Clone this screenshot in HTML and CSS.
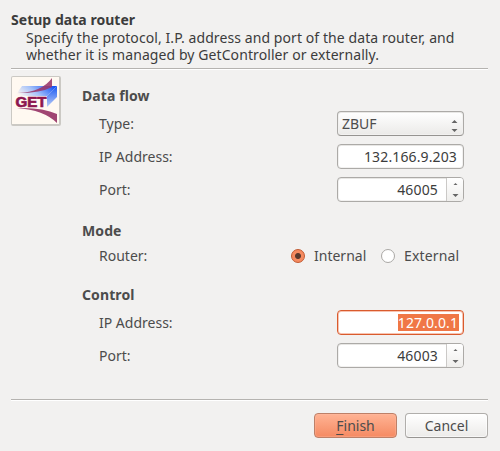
FILE: index.html
```html
<!DOCTYPE html>
<html lang="en">
<head>
<meta charset="utf-8">
<title>Setup data router</title>
<link rel="stylesheet" href="styles.css">
</head>
<body>
<main class="dialog">
  <header class="header">
    <h1 class="title">Setup data router</h1>
    <p class="description"><span class="line-one">Specify the protocol, I.P. address and port of the data router, and</span><span class="line-two">whether it is managed by GetController or externally.</span></p>
  </header>
  <div class="content">
    <div class="logo">
      <svg width="46" height="46" viewBox="0 0 46 46" role="img" aria-label="GET">
        <defs>
          <linearGradient id="blue" x1="0" x2="1" y1=".6" y2=".3"><stop offset="0" stop-color="#fff7ef"/><stop offset=".45" stop-color="#a5c2fa"/><stop offset="1" stop-color="#1553f5"/></linearGradient>
          <linearGradient id="side" x1="0" x2="0" y1="0" y2="1"><stop offset="0" stop-color="#1958f2"/><stop offset="1" stop-color="#bacdf7"/></linearGradient>
        </defs>
        <path d="M9 9H44L34 19H2Z" fill="url(#blue)"/>
        <path d="M44 9V20L34 30V19Z" fill="url(#side)"/>
        <path d="M5 16Q29 15 39 1V10Q28 16 5 16Z" fill="#9b3569" fill-opacity=".88"/>
        <path d="M4 31Q29 30 44 37V46Q31 33 4 31Z" fill="#a04572"/>
        <text class="logo-text" x="2.5" y="30" textLength="31" lengthAdjust="spacingAndGlyphs">GET</text>
      </svg>
    </div>
    <form class="form">
      <h2 class="section">Data flow</h2>
      <div class="row"><span class="label">Type:</span><div class="field combo"><span class="value">ZBUF</span><svg class="arrows" width="7" height="13" viewBox="0 0 7 13"><path d="M.5 4L3.5 1L6.5 4ZM.5 10H6.5L3.5 13Z"/></svg></div></div>
      <div class="row"><span class="label">IP Address:</span><div class="field entry"><span class="value address">132.166.9.203</span></div></div>
      <div class="row"><span class="label">Port:</span><div class="field spin"><span class="value number">46005</span><span class="stepper"><svg class="arrows" width="7" height="15" viewBox="0 0 7 15"><path d="M1.5 3L3.5 1L5.5 3ZM.5 12H6.5L3.5 15Z"/></svg></span></div></div>
      <h2 class="section mode">Mode</h2>
      <div class="row router"><span class="router-label">Router:</span><div class="options"><span class="radio selected"></span><span class="internal">Internal</span><span class="radio"></span><span class="external">External</span></div></div>
      <h2 class="section control">Control</h2>
      <div class="row"><span class="label">IP Address:</span><div class="field entry focused"><span class="selection">127.0.0.1</span></div></div>
      <div class="row"><span class="label">Port:</span><div class="field spin"><span class="value number">46003</span><span class="stepper"><svg class="arrows" width="7" height="15" viewBox="0 0 7 15"><path d="M1.5 3L3.5 1L5.5 3ZM.5 12H6.5L3.5 15Z"/></svg></span></div></div>
    </form>
  </div>
  <footer class="footer">
    <button class="button primary"><span class="mnemonic">F</span>inish</button>
    <button class="button">Cancel</button>
  </footer>
</main>
</body>
</html>
```
FILE: styles.css
```css
* { box-sizing: border-box; }
body { margin: 0; background: #f2f1f0; color: #4c4c4c; font: 14px/18px "Noto Sans", sans-serif; white-space: nowrap; overflow: hidden; }
.dialog { width: 500px; height: 451px; padding: 11px 12px 12px 11px; display: flex; flex-direction: column; }
.header { height: 59px; border-bottom: 1px solid #fff; box-shadow: inset 0 -1px #b5b3b0; }
h1, h2, p { margin: 0; font-size: 14px; }
.title { line-height: 18px; color: #3c3c3c; letter-spacing: .03px; }
.description { padding-left: 15px; line-height: 17px; color: #3c3c3c; }
.line-one, .line-two { display: block; letter-spacing: .085px; }
.content { display: flex; gap: 21px; height: 330px; padding-top: 6px; }
.logo { width: 50px; height: 50px; border: 1px solid #cbc9c4; border-right-width: 2px; border-bottom-width: 2px; border-radius: 2px; background: #fff9f1; }
.logo svg { display: block; margin-left: 1px; }
.logo-text { font: 900 14.5px "Liberation Sans", sans-serif; fill: #8d1750; stroke: #8d1750; stroke-width: .7px; }
.form { width: 382px; padding-top: 11px; }
.section { height: 18px; line-height: 18px; letter-spacing: .1px; }
.row { display: flex; justify-content: space-between; align-items: center; height: 25px; margin-bottom: 8px; padding-left: 17px; }
.label, .value { padding-top: 2px; }
.section + .row { margin-top: 6px; }
.mode { margin-top: 20px; }
.mode + .router { margin-top: 4px; height: 24px; margin-bottom: 0; padding-right: 4px; }
.control { margin-top: 18px; }
.field { width: 127px; height: 25px; border: 1px solid #acaaa7; border-radius: 4px; display: flex; align-items: center; justify-content: flex-end; background: #fff; box-shadow: inset 0 1px #e8e7e5, inset 0 0 0 1px #f2f1f0; color: #3c3c3c; }
.combo { justify-content: space-between; padding: 0 5px 0 4px; color: #4c4c4c; background: linear-gradient(#fff, #ebeae8); border-bottom-color: #969491; }
.combo .arrows { margin-top: 4px; }
.arrows { fill: #666; flex: none; }
.entry { padding-right: 6px; }
.address { letter-spacing: .13px; }
.focused { border: 1px solid #d95b2e; box-shadow: inset 0 0 0 1px #f8c4b1; padding-right: 4px; }
.selection { background: #f07746; color: #fff; height: 17px; line-height: 17px; padding-right: 1px; letter-spacing: .1px; }
.spin { padding: 0; }
.number { margin-right: 8px; letter-spacing: .15px; }
.stepper { width: 17px; height: 23px; border-left: 1px solid #cbc9c7; display: grid; place-items: center; background: linear-gradient(#fff, #efeeec); border-radius: 0 3px 3px 0; }
.options { display: flex; align-items: center; width: 169px; }
.radio { width: 14px; height: 14px; flex: none; border: 1px solid #aaa8a5; border-radius: 50%; background: #fff; }
.selected { border-color: #c1582f; background: radial-gradient(circle, #59392d 0 2.5px, #f58a60 3.5px); }
.internal { width: 73px; flex: none; padding-left: 9px; }
.radio:not(.selected) { margin-left: 3px; }
.external { padding-left: 9px; letter-spacing: .15px; }
.footer { height: 40px; border-top: 1px solid #b5b3b0; box-shadow: inset 0 1px #fff; margin-top: 0; padding-top: 13px; display: flex; justify-content: flex-end; gap: 8px; }
.button { width: 83px; height: 25px; flex: none; padding: 1px 0 0; border: 1px solid #b0aeab; border-bottom-color: #979592; border-radius: 4px; background: linear-gradient(#fff, #ecebe9); color: #4c4c4c; font: inherit; box-shadow: inset 0 0 0 1px #fff9; }
.primary { border-color: #bd8068; background: linear-gradient(#ffb394, #f58a62); box-shadow: inset 0 0 0 1px #ffbea455; }
.mnemonic { text-decoration: underline; text-underline-offset: 3px; }
```
